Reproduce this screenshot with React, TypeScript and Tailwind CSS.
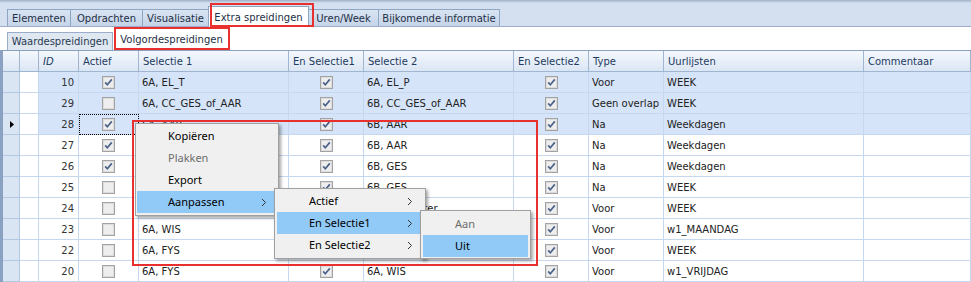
import React from "react";

type Row = {
  id: number;
  a: boolean;
  s1: string;
  e1: boolean;
  s2: string;
  e2: boolean;
  t: string;
  u: string;
  sel?: boolean;
  cur?: boolean;
};

const rows: Row[] = [
  { id: 10, a: true, s1: "6A, EL_T", e1: true, s2: "6A, EL_P", e2: true, t: "Voor", u: "WEEK", sel: true },
  { id: 29, a: false, s1: "6A, CC_GES_of_AAR", e1: true, s2: "6B, CC_GES_of_AAR", e2: true, t: "Geen overlap", u: "WEEK", sel: true },
  { id: 28, a: true, s1: "6A, AAR", e1: true, s2: "6B, AAR", e2: true, t: "Na", u: "Weekdagen", sel: true, cur: true },
  { id: 27, a: true, s1: "", e1: true, s2: "6B, AAR", e2: true, t: "Na", u: "Weekdagen" },
  { id: 26, a: true, s1: "", e1: true, s2: "6B, GES", e2: true, t: "Na", u: "Weekdagen" },
  { id: 25, a: false, s1: "", e1: true, s2: "6B, GES", e2: true, t: "Na", u: "WEEK" },
  { id: 24, a: false, s1: "", e1: true, s2: "6B, LO_Winter", e2: true, t: "Voor", u: "WEEK" },
  { id: 23, a: false, s1: "6A, WIS", e1: true, s2: "", e2: true, t: "Voor", u: "w1_MAANDAG" },
  { id: 22, a: false, s1: "6A, FYS", e1: true, s2: "", e2: true, t: "Voor", u: "WEEK" },
  { id: 20, a: false, s1: "6A, FYS", e1: true, s2: "6A, WIS", e2: true, t: "Voor", u: "w1_VRIJDAG" },
];

const COLS =
  "grid grid-cols-[17px_19px_40px_60px_150px_75px_150px_75px_75px_200px_1fr]";

function CheckBox({ checked }: { checked: boolean }) {
  return (
    <svg width="13" height="13" viewBox="0 0 13 13" className="block">
      <rect x="0.5" y="0.5" width="12" height="12" fill="#e9e9e9" stroke="#a3a3a3" />
      <rect x="1.5" y="1.5" width="10" height="10" fill="#eeeeee" stroke="#dcdcdc" />
      {checked && (
        <path d="M3.2 6.4 L5.3 8.8 L9.8 3.4" fill="none" stroke="#4a6289" strokeWidth="1.7" />
      )}
    </svg>
  );
}

function Arrow() {
  return (
    <svg width="6" height="9" viewBox="0 0 6 9" className="block">
      <path d="M1 1 L4.5 4.5 L1 8" fill="none" stroke="#333" strokeWidth="1" />
    </svg>
  );
}

function HeaderCell({ children, italic }: { children?: React.ReactNode; italic?: boolean }) {
  return (
    <div
      className={`h-[21px] border-r border-b border-[#9fb5d2] bg-gradient-to-b from-[#f4f8fd] to-[#dbe6f4] flex items-center pl-[4px] text-[#1e3a5f] overflow-hidden whitespace-nowrap ${
        italic ? "italic" : ""
      }`}
    >
      {children}
    </div>
  );
}

function Cell({
  children,
  bg,
  right,
  center,
  extra,
}: {
  children?: React.ReactNode;
  bg: string;
  right?: boolean;
  center?: boolean;
  extra?: string;
}) {
  return (
    <div
      className={`h-[21px] border-r border-b border-[#c5d8f0] flex items-center overflow-hidden whitespace-nowrap ${bg} ${
        right ? "justify-end pr-[4px]" : center ? "justify-center" : "pl-[3px]"
      } ${extra ?? ""}`}
    >
      {children}
    </div>
  );
}

function MenuItem({
  label,
  hl,
  disabled,
  arrow,
  pl,
}: {
  label: string;
  hl?: boolean;
  disabled?: boolean;
  arrow?: boolean;
  pl: string;
}) {
  return (
    <div
      className={`h-[22px] flex items-center justify-between ${pl} pr-[10px] ${
        hl ? "bg-[#91c9f7]" : ""
      } ${disabled ? "text-[#6d6d6d]" : "text-[#000]"}`}
    >
      <span>{label}</span>
      {arrow && <Arrow />}
    </div>
  );
}

export default function App() {
  return (
    <div className="relative w-[971px] h-[282px] overflow-hidden bg-white font-['DejaVu_Sans',sans-serif] text-[10px] text-[#222]">
      {/* Main tab strip */}
      <div className="h-[27px] bg-[#d4e0ef] flex flex-col border-b border-[#9aaecb]">
        <div className="h-[3px] bg-gradient-to-b from-[#9eb0c6] to-[#d4e0ef]" />
        <div className="flex-1 flex items-end pl-[7px]">
          {[
            ["Elementen", "w-[64px]"],
            ["Opdrachten", "w-[73px]"],
            ["Visualisatie", "w-[67px]"],
          ].map(([t, w]) => (
            <div
              key={t}
              className={`${w} h-[17px] border border-b-0 border-[#8ea5c3] bg-gradient-to-b from-[#d9e4f2] to-[#c5d4e8] flex items-center justify-center text-[#1d2f45] -mr-[1px]`}
            >
              {t}
            </div>
          ))}
          <div className="w-[101px] h-[21px] border border-b-0 border-[#8ea5c3] bg-white flex items-center justify-center text-[#1d2f45] -mb-[1px] -mr-[1px]">
            Extra spreidingen
          </div>
          {[
            ["Uren/Week", "w-[71px]"],
            ["Bijkomende informatie", "w-[122px]"],
          ].map(([t, w]) => (
            <div
              key={t}
              className={`${w} h-[17px] border border-b-0 border-[#8ea5c3] bg-gradient-to-b from-[#d9e4f2] to-[#c5d4e8] flex items-center justify-center text-[#1d2f45] -mr-[1px]`}
            >
              {t}
            </div>
          ))}
        </div>
      </div>

      {/* Sub tab strip */}
      <div className="h-[23px] bg-white flex items-end pl-[7px]">
        <div className="w-[106px] h-[18px] border border-b-0 border-[#9aaecb] bg-[#dfe7f1] flex items-center justify-center text-[#2a3b52]">
          Waardespreidingen
        </div>
        <div className="w-[115px] h-[21px] ml-[1px] bg-white flex items-center justify-center text-[#1d2f45]">
          Volgordespreidingen
        </div>
      </div>

      {/* Grid */}
      <div className="flex border-t border-[#8aa0bd]">
        <div className="w-[3px] bg-[#8aa1c1]" />
        <div className="flex-1">
          <div className={COLS}>
            <HeaderCell />
            <HeaderCell />
            <HeaderCell italic>ID</HeaderCell>
            <HeaderCell>Actief</HeaderCell>
            <HeaderCell>Selectie 1</HeaderCell>
            <HeaderCell>En Selectie1</HeaderCell>
            <HeaderCell>Selectie 2</HeaderCell>
            <HeaderCell>En Selectie2</HeaderCell>
            <HeaderCell>Type</HeaderCell>
            <HeaderCell>Uurlijsten</HeaderCell>
            <HeaderCell>Commentaar</HeaderCell>
          </div>
          {rows.map((r) => {
            const bg = r.sel ? "bg-[#d5e4f8]" : "bg-white";
            return (
              <div key={r.id} className={COLS}>
                <div className="h-[21px] border-r border-b border-[#b4c7e0] bg-[#dae5f4] flex items-center pl-[7px]">
                  {r.cur && (
                    <svg width="4" height="7" viewBox="0 0 4 7" className="block">
                      <polygon points="0,0 4,3.5 0,7" fill="#000" />
                    </svg>
                  )}
                </div>
                <Cell bg="bg-white" />
                <Cell bg={bg} right>
                  <span className="text-[#333]">{r.id}</span>
                </Cell>
                <Cell bg={bg} center extra={r.cur ? "outline outline-1 outline-dotted outline-black -outline-offset-1" : ""}>
                  <CheckBox checked={r.a} />
                </Cell>
                <Cell bg={bg}>{r.s1}</Cell>
                <Cell bg={bg} center>
                  <CheckBox checked={r.e1} />
                </Cell>
                <Cell bg={bg}>{r.s2}</Cell>
                <Cell bg={bg} center>
                  <CheckBox checked={r.e2} />
                </Cell>
                <Cell bg={bg}>{r.t}</Cell>
                <Cell bg={bg}>{r.u}</Cell>
                <Cell bg={bg} />
              </div>
            );
          })}
        </div>
      </div>

      {/* Context menus */}
      <div className="font-['Noto_Sans',sans-serif] text-[11px]">
        <div className="absolute left-[135px] top-[123px] w-[144px] h-[93px] bg-[#f0f0f0] border border-[#a0a0a0] shadow-[2px_2px_3px_rgba(0,0,0,0.35)] pt-[1px] px-[1px]">
          <MenuItem label="Kopiëren" pl="pl-[31px]" />
          <MenuItem label="Plakken" pl="pl-[31px]" disabled />
          <MenuItem label="Export" pl="pl-[31px]" />
          <MenuItem label="Aanpassen" pl="pl-[31px]" hl arrow />
        </div>
        <div className="absolute left-[274px] top-[188px] w-[152px] h-[71px] bg-[#f0f0f0] border border-[#a0a0a0] shadow-[2px_2px_3px_rgba(0,0,0,0.35)] pt-[1px] px-[2px]">
          <MenuItem label="Actief" pl="pl-[32px]" arrow />
          <MenuItem label="En Selectie1" pl="pl-[32px]" hl arrow />
          <MenuItem label="En Selectie2" pl="pl-[32px]" arrow />
        </div>
        <div className="absolute left-[420px] top-[210px] w-[111px] h-[49px] bg-[#f0f0f0] border border-[#a0a0a0] shadow-[2px_2px_3px_rgba(0,0,0,0.35)] pt-[2px] px-[2px]">
          <MenuItem label="Aan" pl="pl-[32px]" disabled />
          <MenuItem label="Uit" pl="pl-[32px]" hl />
        </div>
      </div>

      {/* Red annotation boxes */}
      <div className="absolute left-[210px] top-[3px] w-[104px] h-[24px] border-2 border-[#e8302f]" />
      <div className="absolute left-[114px] top-[27px] w-[116px] h-[23px] border-2 border-[#e8302f]" />
      <div className="absolute left-[132px] top-[120px] w-[406px] h-[146px] border-2 border-[#e8302f]" />
    </div>
  );
}
